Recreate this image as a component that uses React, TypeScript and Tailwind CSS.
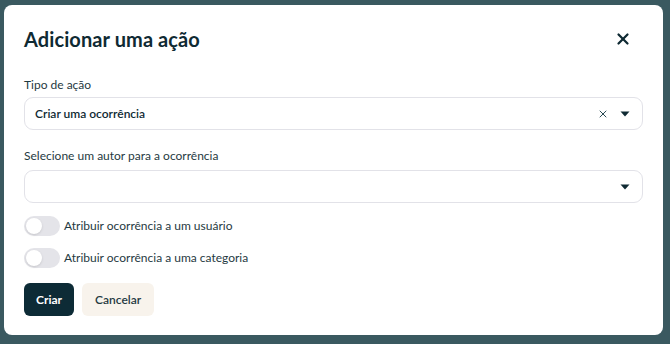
import { X } from "lucide-react";

function Caret() {
  return (
    <svg width="10" height="6" viewBox="0 0 10 6" className="text-[#0f2a33]">
      <path d="M0.5 0.5 H9.5 L5 5.5 Z" fill="currentColor" />
    </svg>
  );
}

function Toggle({ label }: { label: string }) {
  return (
    <label className="flex items-center gap-[4px] cursor-pointer">
      <span className="relative w-[36px] h-[20px] rounded-full bg-[#e4e4e9]">
        <span className="absolute left-[2px] top-[2px] w-[16px] h-[16px] rounded-full bg-white shadow-sm" />
      </span>
      <span className="text-[12px] text-[#1f3a42]">{label}</span>
    </label>
  );
}

export default function App() {
  return (
    <div
      className="w-[670px] h-[344px] bg-[#3a5960] pt-[5px] pl-[4px] pr-[7px] pb-[9px]"
      style={{ fontFamily: "Lato, 'Noto Sans', sans-serif" }}
    >
      <div className="h-full bg-white rounded-[8px] px-[20px] pt-[22px] text-[#0f2a33]">
        <div className="flex items-center justify-between h-[24px]">
          <h2 className="text-[20px] font-bold tracking-[0.1px]">Adicionar uma ação</h2>
          <X size={18} strokeWidth={3} className="mr-[11px]" />
        </div>

        <div className="mt-[25px] text-[12px] text-[#1f3a42]">Tipo de ação</div>
        <div className="mt-[3px] h-[33px] border border-[#e2e2e8] rounded-[9px] flex items-center pl-[10px] pr-[12px]">
          <span className="text-[12px] font-semibold flex-1">Criar uma ocorrência</span>
          <X size={12} strokeWidth={2} className="text-[#2a4b55] mr-[11px]" />
          <Caret />
        </div>

        <div className="mt-[17px] text-[12px] text-[#1f3a42]">Selecione um autor para a ocorrência</div>
        <div className="mt-[5px] h-[33px] border border-[#e2e2e8] rounded-[9px] flex items-center justify-end pr-[12px]">
          <Caret />
        </div>

        <div className="mt-[13px] flex flex-col gap-[12px]">
          <Toggle label="Atribuir ocorrência a um usuário" />
          <Toggle label="Atribuir ocorrência a uma categoria" />
        </div>

        <div className="mt-[15px] flex gap-[8px]">
          <button className="h-[33px] px-[12px] rounded-[6px] bg-[#0d2b36] text-white text-[12px] font-bold">
            Criar
          </button>
          <button className="h-[33px] px-[13px] rounded-[6px] bg-[#f8f3ec] text-[#1f3a42] text-[12px] font-semibold">
            Cancelar
          </button>
        </div>
      </div>
    </div>
  );
}
